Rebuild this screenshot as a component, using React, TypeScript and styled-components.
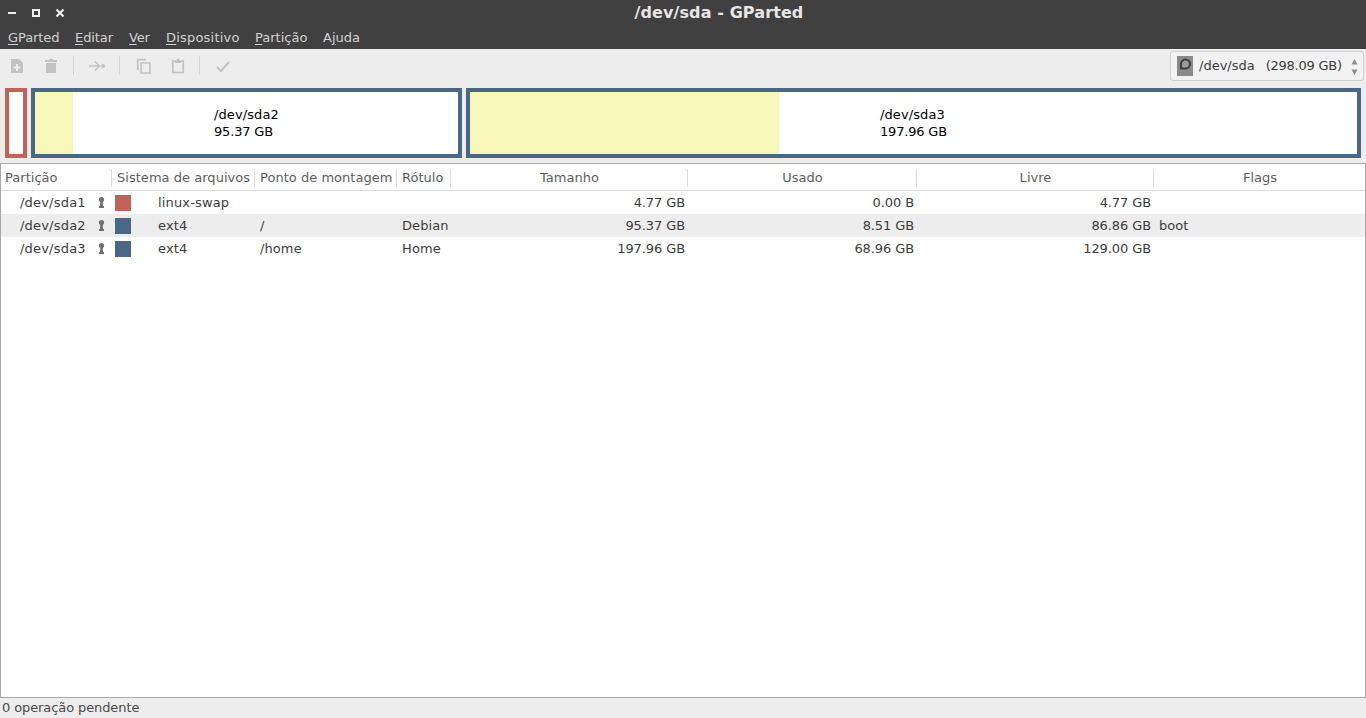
import React from "react";
import styled, { createGlobalStyle } from "styled-components";

const Global = createGlobalStyle`
  html, body { margin: 0; padding: 0; height: 100%; overflow: hidden; background: #ededed; }
  #root { height: 100%; }
  * { box-sizing: border-box; }
`;

const Win = styled.div`
  height: 718px;
  display: flex;
  flex-direction: column;
  font-family: "DejaVu Sans", sans-serif;
  font-size: 13px;
  color: #3c3c3c;
  background: #ededed;
`;
const Chrome = styled.div`
  background: #404040;
  height: 49px;
  flex: none;
`;
const TitleBar = styled.div`
  height: 25px;
  display: grid;
  grid-template-columns: 72px 1fr;
  align-items: center;
`;
const WinButtons = styled.div`
  display: flex;
  gap: 12px;
  padding-left: 6px;
`;
const WinButton = styled.svg`
  width: 12px;
  height: 12px;
  color: #f0f0f0;
`;
const Title = styled.div`
  text-align: center;
  font-weight: 700;
  font-size: 16px;
  letter-spacing: 0.1px;
  color: #e6e6e6;
  padding-bottom: 1px;
`;
const MenuBar = styled.div`
  height: 24px;
  display: flex;
  align-items: center;
  gap: 16px;
  padding-left: 8px;
  color: #d2d2d2;
`;
const MenuItem = styled.span<{ $w: number; $ls?: number }>`
  width: ${(p) => p.$w}px;
  letter-spacing: ${(p) => p.$ls ?? 0}px;
  white-space: nowrap;
`;
const Mn = styled.span`
  text-decoration: underline;
  text-underline-offset: 2px;
`;
const Toolbar = styled.div`
  height: 35px;
  flex: none;
  display: flex;
  align-items: flex-start;
  padding: 2px 2px 0 0;
`;
const Tools = styled.div`
  display: flex;
  align-items: center;
  height: 29px;
  flex: 1;
`;
const Tool = styled.svg<{ $ml: number; $w?: number }>`
  width: ${(p) => p.$w ?? 16}px;
  height: 16px;
  margin-left: ${(p) => p.$ml}px;
  color: #c2c2c2;
  flex: none;
`;
const Sep = styled.div<{ $ml: number }>`
  width: 1px;
  height: 19px;
  background: #d3d3d3;
  margin-left: ${(p) => p.$ml}px;
  flex: none;
`;
const Combo = styled.div`
  width: 194px;
  height: 30px;
  border: 1px solid #cfcfcf;
  border-radius: 3px;
  background: #f2f2f2;
  display: flex;
  align-items: center;
  padding-left: 6px;
  gap: 6px;
  color: #3c3c3c;
`;
const ComboText = styled.span`
  flex: 1;
  display: flex;
  gap: 11px;
  white-space: pre;
  padding-bottom: 2px;
`;
const ComboSize = styled.span`
  letter-spacing: -0.25px;
`;
const DiskIcon = styled.svg`
  width: 16px;
  height: 20px;
  flex: none;
`;
const Arrows = styled.svg`
  width: 7px;
  height: 18px;
  margin-right: 5px;
  color: #8c8c8c;
  flex: none;
`;
const MapRow = styled.div`
  height: 70px;
  margin: 4px 5px 0;
  display: flex;
  gap: 4px;
  flex: none;
`;
const Part = styled.div<{ $w: number; $c: string }>`
  width: ${(p) => p.$w}px;
  flex: none;
  border: 4px solid ${(p) => p.$c};
  background: #fff;
  display: flex;
`;
const Used = styled.div<{ $w: number }>`
  width: ${(p) => p.$w}px;
  background: #f7f7b9;
  flex: none;
`;
const PartLabel = styled.div<{ $ml: number }>`
  margin-left: ${(p) => p.$ml}px;
  align-self: center;
  color: #000;
  line-height: 17px;
`;
const PartName = styled.div`
  letter-spacing: 0.1px;
`;
const PartSize = styled.div`
  letter-spacing: -0.18px;
`;
const ListBox = styled.div`
  margin-top: 5px;
  flex: 1;
  min-height: 0;
  background: #fff;
  border: 1px solid #a8a8a8;
`;
const cols = "111px 143px 142px 54px 237px 229px 237px 1fr";
const Head = styled.div`
  height: 27px;
  display: grid;
  grid-template-columns: ${cols};
  border-bottom: 1px solid #dedede;
  color: #5e5e5e;
`;
const HeadCell = styled.div<{ $center?: boolean; $pl?: number }>`
  border-right: 1px solid #dedede;
  height: 18px;
  margin-top: 5px;
  line-height: 17px;
  padding-left: ${(p) => (p.$center ? 1 : p.$pl ?? 5)}px;
  text-align: ${(p) => (p.$center ? "center" : "left")};
  letter-spacing: 0.03px;
  white-space: nowrap;
  overflow: hidden;
  &:last-child { border-right: none; }
`;
const Row = styled.div<{ $alt?: boolean }>`
  height: 23px;
  display: grid;
  grid-template-columns: ${cols};
  align-items: center;
  background: ${(p) => (p.$alt ? "#ededed" : "#fff")};
`;
const Cell = styled.div`
  padding-left: 5px;
  white-space: nowrap;
  letter-spacing: 0.1px;
`;
const NameCell = styled.div`
  display: flex;
  align-items: center;
  padding-left: 19px;
  justify-content: space-between;
  padding-right: 7px;
  letter-spacing: 0.2px;
`;
const FsCell = styled.div`
  display: flex;
  align-items: center;
  padding-left: 3px;
  letter-spacing: 0.15px;
`;
const Swatch = styled.span<{ $c: string }>`
  width: 16px;
  height: 16px;
  background: ${(p) => p.$c};
  margin-right: 27px;
  flex: none;
`;
const Num = styled.div`
  text-align: right;
  padding-right: 3px;
  letter-spacing: -0.1px;
`;
const FlagCell = styled.div`
  padding-left: 5px;
`;
const Lock = styled.svg`
  width: 7px;
  height: 11px;
  color: #707070;
  flex: none;
`;
const Status = styled.div`
  height: 20px;
  flex: none;
  padding-left: 2px;
  line-height: 20px;
  color: #4a4a4a;
  letter-spacing: -0.1px;
`;

const LockIcon = () => (
  <Lock viewBox="0 0 7 11">
    <circle cx="3.500" cy="2.600" r="2.600" fill="currentColor" />
    <path d="M2.400 4h2.200l.5 5H6v2H1V9h.9z" fill="currentColor" />
  </Lock>
);

const rows = [
  { name: "/dev/sda1", c: "#c2635a", fs: "linux-swap", mount: "", label: "", size: "4.77 GB", used: "0.00 B", free: "4.77 GB", flags: "" },
  { name: "/dev/sda2", c: "#4a6885", fs: "ext4", mount: "/", label: "Debian", size: "95.37 GB", used: "8.51 GB", free: "86.86 GB", flags: "boot" },
  { name: "/dev/sda3", c: "#4a6885", fs: "ext4", mount: "/home", label: "Home", size: "197.96 GB", used: "68.96 GB", free: "129.00 GB", flags: "" },
];

export default function App() {
  return (
    <Win>
      <Global />
      <Chrome>
        <TitleBar>
          <WinButtons>
            <WinButton viewBox="0 0 12 12"><rect x="2" y="5" width="8" height="2" fill="currentColor" /></WinButton>
            <WinButton viewBox="0 0 12 12"><rect x="3" y="3" width="6" height="6" fill="none" stroke="currentColor" strokeWidth="2" /></WinButton>
            <WinButton viewBox="0 0 12 12"><path d="M2.500 2.500l7 7M9.500 2.500l-7 7" stroke="currentColor" strokeWidth="2" /></WinButton>
          </WinButtons>
          <Title>/dev/sda - GParted</Title>
        </TitleBar>
        <MenuBar>
          <MenuItem $w={51} $ls={-0.1}><Mn>G</Mn>Parted</MenuItem>
          <MenuItem $w={38} $ls={-0.1}><Mn>E</Mn>ditar</MenuItem>
          <MenuItem $w={21} $ls={-0.2}><Mn>V</Mn>er</MenuItem>
          <MenuItem $w={73} $ls={0.2}><Mn>D</Mn>ispositivo</MenuItem>
          <MenuItem $w={52}><Mn>P</Mn>artição</MenuItem>
          <MenuItem $w={37}>A<Mn>j</Mn>uda</MenuItem>
        </MenuBar>
      </Chrome>
      <Toolbar>
        <Tools>
          <Tool $ml={9} viewBox="0 0 16 16">
            <path fillRule="evenodd" d="M2 1h8l4 4v10H2zM7 6v2.500H4.500v2H7V13h2v-2.500h2.500v-2H9V6z" fill="currentColor" />
          </Tool>
          <Tool $ml={18} viewBox="0 0 16 16">
            <path d="M6 1h4v1h4v2H2V2h4zM3 5h10v10H3z" fill="currentColor" />
          </Tool>
          <Sep $ml={14} />
          <Tool $ml={14} $w={18} viewBox="0 0 18 16">
            <path d="M1 8h10M7 3.500L11.500 8 7 12.500" fill="none" stroke="currentColor" strokeWidth="1.500" />
            <circle cx="15" cy="8" r="2" fill="currentColor" />
          </Tool>
          <Sep $ml={13} />
          <Tool $ml={16} viewBox="0 0 16 16">
            <path d="M1.700 12V1.700H10M5 5h9v10H5z" fill="none" stroke="currentColor" strokeWidth="1.700" />
          </Tool>
          <Tool $ml={18} viewBox="0 0 16 16">
            <path d="M5 3H2.800v11.500h10.400V3H11" fill="none" stroke="currentColor" strokeWidth="1.700" />
            <path d="M6.500 0.800h3V2.500H11V5H5V2.500h1.500z" fill="currentColor" />
          </Tool>
          <Sep $ml={13} />
          <Tool $ml={15} viewBox="0 0 16 16">
            <path d="M2 9l4 4 8-9" fill="none" stroke="currentColor" strokeWidth="2" />
          </Tool>
        </Tools>
        <Combo>
          <DiskIcon viewBox="0 0 16 20">
            <rect width="16" height="20" fill="#8a8a8a" />
            <path d="M4 12.500V8a4.500 4.500 0 1 1 4.500 4.500z" fill="#9a9a9a" stroke="#3d3d3d" strokeWidth="2" />
          </DiskIcon>
          <ComboText>
            <span>/dev/sda</span>
            <ComboSize>(298.09 GB)</ComboSize>
          </ComboText>
          <Arrows viewBox="0 0 7 18">
            <path d="M3.500 2l3 5.500H.5zM3.500 18L.5 12.500h6z" fill="currentColor" />
          </Arrows>
        </Combo>
      </Toolbar>
      <MapRow>
        <Part $w={22} $c="#c2635a" />
        <Part $w={431} $c="#4a6885">
          <Used $w={38} />
          <PartLabel $ml={141}><PartName>/dev/sda2</PartName><PartSize>95.37 GB</PartSize></PartLabel>
        </Part>
        <Part $w={895} $c="#4a6885">
          <Used $w={309} />
          <PartLabel $ml={101}><PartName>/dev/sda3</PartName><PartSize>197.96 GB</PartSize></PartLabel>
        </Part>
      </MapRow>
      <ListBox>
        <Head>
          <HeadCell $pl={4}>Partição</HeadCell>
          <HeadCell>Sistema de arquivos</HeadCell>
          <HeadCell>Ponto de montagem</HeadCell>
          <HeadCell>Rótulo</HeadCell>
          <HeadCell $center>Tamanho</HeadCell>
          <HeadCell $center>Usado</HeadCell>
          <HeadCell $center>Livre</HeadCell>
          <HeadCell $center>Flags</HeadCell>
        </Head>
        {rows.map((r, i) => (
          <Row key={r.name} $alt={i === 1}>
            <NameCell>{r.name}<LockIcon /></NameCell>
            <FsCell><Swatch $c={r.c} />{r.fs}</FsCell>
            <Cell>{r.mount}</Cell>
            <Cell>{r.label}</Cell>
            <Num>{r.size}</Num>
            <Num>{r.used}</Num>
            <Num>{r.free}</Num>
            <FlagCell>{r.flags}</FlagCell>
          </Row>
        ))}
      </ListBox>
      <Status>0 operação pendente</Status>
    </Win>
  );
}
